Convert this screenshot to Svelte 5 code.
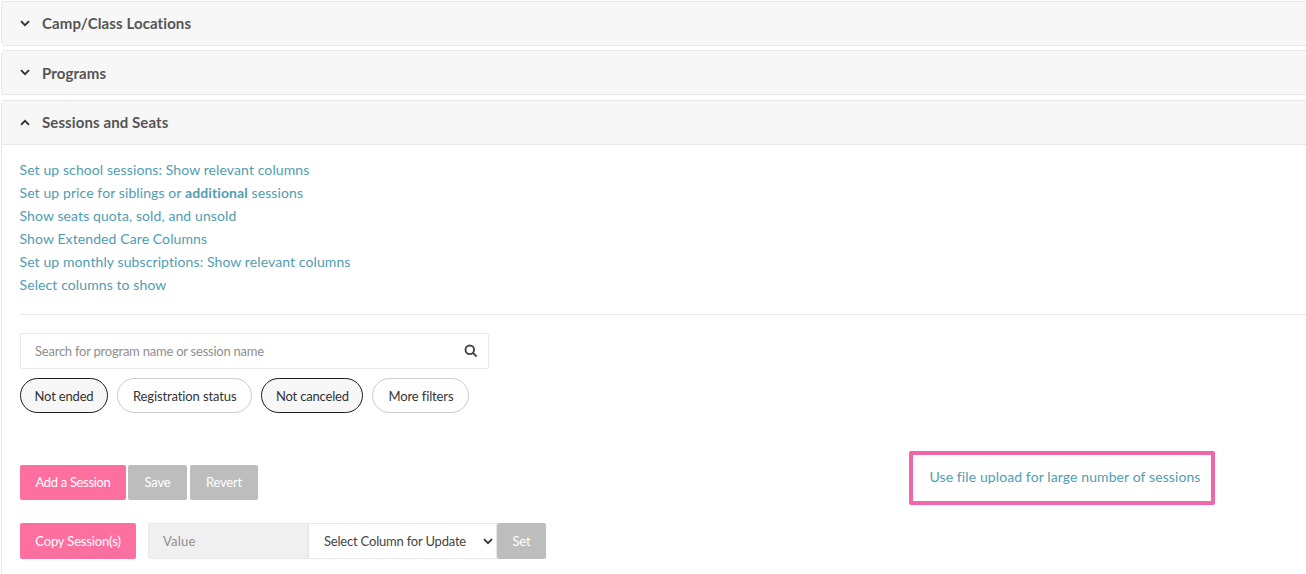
<script>
  const links = [
    ['Set up school sessions: Show relevant columns'],
    ['Set up price for siblings or ', 'additional', ' sessions'],
    ['Show seats quota, sold, and unsold'],
    ['Show Extended Care Columns'],
    ['Set up monthly subscriptions: Show relevant columns'],
    ['Select columns to show']
  ]
  const filters = [
    { label: 'Not ended', active: true },
    { label: 'Registration status', active: false },
    { label: 'Not canceled', active: true },
    { label: 'More filters', active: false }
  ]
</script>

<div class="page">
  <section class="card">
    <header class="card__head">
      <svg class="chev" viewBox="0 0 10 7"><path d="M1 1.2 5 5.2 9 1.2" /></svg>
      <span>Camp/Class Locations</span>
    </header>
  </section>
  <section class="card">
    <header class="card__head">
      <svg class="chev" viewBox="0 0 10 7"><path d="M1 1.2 5 5.2 9 1.2" /></svg>
      <span>Programs</span>
    </header>
  </section>
  <section class="card card--open">
    <header class="card__head">
      <svg class="chev" viewBox="0 0 10 7"><path d="M1 5.8 5 1.8 9 5.8" /></svg>
      <span>Sessions and Seats</span>
    </header>
    <div class="card__body">
      <ul class="links">
        {#each links as l}
          <li>{l[0]}{#if l[1]}<b>{l[1]}</b>{l[2]}{/if}</li>
        {/each}
      </ul>
      <hr />
      <div class="search">
        <span class="search__ph">Search for program name or session name</span>
        <svg class="search__icon" viewBox="0 0 14 14"><circle cx="5.8" cy="5.8" r="4.3" /><path d="M9 9 12.6 12.6" /></svg>
      </div>
      <div class="filters">
        {#each filters as f}
          <span class="pill" class:pill--on={f.active}>{f.label}</span>
        {/each}
      </div>
      <div class="actions">
        <span class="btn btn--pink add">Add a Session</span>
        <span class="btn btn--grey save">Save</span>
        <span class="btn btn--grey revert">Revert</span>
      </div>
      <div class="update">
        <span class="btn btn--pink copy">Copy Session(s)</span>
        <div class="group">
          <span class="value">Value</span>
          <span class="select">Select Column for Update
            <svg viewBox="0 0 10 7"><path d="M1 1.2 5 5.2 9 1.2" /></svg>
          </span>
          <span class="btn btn--grey set">Set</span>
        </div>
      </div>
      <div class="callout">Use file upload for large number of sessions</div>
    </div>
  </section>
</div>

<style>
  :global(body) {
    background: #fff;
    overflow: hidden;
  }

  .page {
    position: relative;
    width: 1306px;
    height: 574px;
    overflow: hidden;
    padding-top: 1px;
    padding-left: 1px;
    box-sizing: border-box;
    font-family: Lato, sans-serif;
    font-size: 14px;
    color: #333;
  }

  .card {
    width: 1320px;
    border: 1px solid #e8e8e8;
    border-radius: 3px;
    margin-bottom: 4px;
    background: #fff;
    box-sizing: border-box;
  }

  .card--open {
    margin-top: 5px;
  }

  .card__head {
    display: flex;
    align-items: center;
    height: 43px;
    padding-left: 18px;
    padding-bottom: 1px;
    box-sizing: border-box;
    background: #f7f7f7;
    font-size: 15px;
    font-weight: 700;
    letter-spacing: 0.1px;
    color: #555;
  }

  .card:nth-child(2) .card__head {
    padding-bottom: 0;
  }

  .card--open .card__head {
    height: 44px;
    border-bottom: 1px solid #e8e8e8;
  }

  .chev {
    width: 10px;
    height: 7px;
    margin-right: 12px;
    fill: none;
    stroke: #2f2f2f;
    stroke-width: 1.8;
  }

  .card__body {
    position: relative;
    padding: 13px 0 0 18px;
    height: 440px;
  }

  .links {
    list-style: none;
    margin: 0 0 0 -0.5px;
    padding: 0;
    color: #4f9db2;
    line-height: 23px;
    letter-spacing: 0.1px;
  }

  hr {
    border: 0;
    border-top: 1px solid #e8e8e8;
    margin: 18px 0 18px;
  }

  .search {
    display: flex;
    align-items: center;
    justify-content: space-between;
    width: 469px;
    height: 36px;
    padding: 0 10px 0 14px;
    box-sizing: border-box;
    border: 1px solid #e8e8e8;
    border-radius: 2px;
    font-size: 13px;
    letter-spacing: -0.23px;
    color: #8f8f8f;
  }

  .search__icon {
    width: 14px;
    height: 14px;
    fill: none;
    stroke: #444;
    stroke-width: 1.9;
  }

  .filters {
    display: flex;
    gap: 9px;
    margin-top: 9px;
  }

  .pill {
    display: flex;
    align-items: center;
    height: 35px;
    padding: 0 15px;
    box-sizing: border-box;
    border: 1px solid #ccc;
    border-radius: 18px;
    font-size: 13px;
    letter-spacing: -0.12px;
    color: #333;
  }

  .pill--on {
    padding: 0 13.5px;
    border: 1.5px solid #1a1a1a;
    background: #f7f7f7;
    letter-spacing: -0.17px;
  }

  .actions {
    display: flex;
    margin-top: 52px;
  }

  .btn {
    display: flex;
    align-items: center;
    justify-content: center;
    height: 35px;
    padding-bottom: 1px;
    border-radius: 2px;
    font-size: 13px;
    letter-spacing: -0.2px;
    color: #fff;
    box-sizing: border-box;
  }

  .btn--pink {
    background: #fd6f9f;
  }

  .btn--grey {
    background: #bdbdbd;
  }

  .add {
    width: 106px;
    letter-spacing: -0.33px;
  }

  .save {
    width: 59px;
    margin-left: 2px;
  }

  .revert {
    width: 68px;
    margin-left: 3px;
  }

  .update {
    display: flex;
    margin-top: 23px;
  }

  .copy {
    width: 116px;
    height: 36px;
    letter-spacing: -0.15px;
  }

  .group {
    display: flex;
    height: 36px;
    margin-left: 12px;
  }

  .value {
    display: flex;
    align-items: center;
    width: 160px;
    padding-left: 14px;
    box-sizing: border-box;
    background: #f0f0f0;
    border: 1px solid #e8e8e8;
    border-radius: 2px 0 0 2px;
    font-size: 13px;
    letter-spacing: 0.2px;
    color: #8f8f8f;
  }

  .select {
    display: flex;
    align-items: center;
    justify-content: space-between;
    width: 189px;
    padding: 0 3px 0 15px;
    box-sizing: border-box;
    background: #fff;
    border: 1px solid #e8e8e8;
    font-size: 13px;
    letter-spacing: -0.2px;
    white-space: nowrap;
    color: #444;
  }

  .select svg {
    width: 10px;
    height: 7px;
    fill: none;
    stroke: #333;
    stroke-width: 1.8;
  }

  .set {
    width: 49px;
    height: 36px;
  }

  .callout {
    position: absolute;
    left: 907px;
    top: 306px;
    width: 306px;
    height: 54px;
    display: flex;
    align-items: center;
    justify-content: center;
    padding: 0 0 4px 6px;
    box-sizing: border-box;
    border: 4px solid #f066a8;
    border-radius: 2px;
    letter-spacing: 0.1px;
    color: #4f9db2;
  }
</style>
